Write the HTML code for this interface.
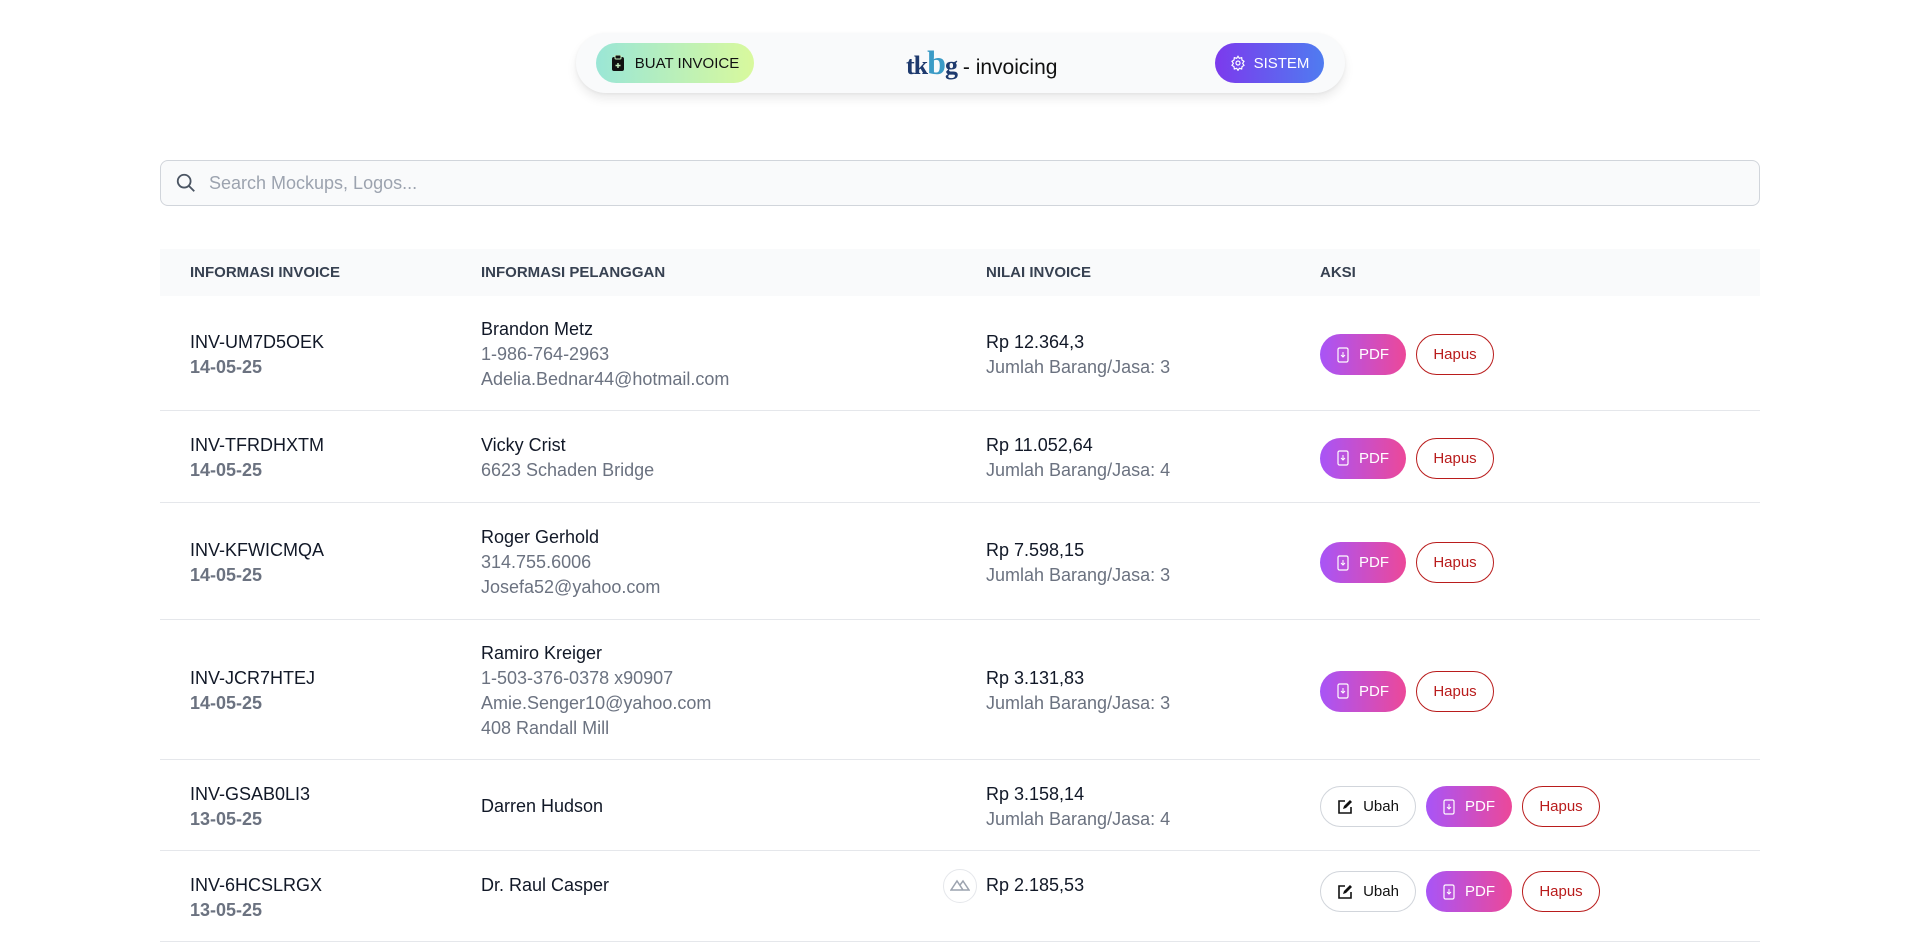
<!DOCTYPE html>
<html><head><meta charset="utf-8"><style>
*{box-sizing:border-box;margin:0;padding:0}
body{width:1920px;height:894px;overflow:hidden;background:#fff;font-family:"Liberation Sans",sans-serif;color:#111827;position:relative}
.nav{position:absolute;left:576px;top:33px;width:769px;height:60px;border-radius:30px;background:#f9fafb;box-shadow:0 6px 10px rgba(0,0,0,.08),0 1px 3px rgba(0,0,0,.05)}
.btn1{position:absolute;left:20px;top:10px;width:158px;height:40px;border-radius:20px;background:linear-gradient(90deg,#9ae6d6,#d9f99d);display:flex;align-items:center;justify-content:center;gap:10px;font-size:15px;color:#111}
.btn2{position:absolute;left:639px;top:10px;width:109px;height:40px;border-radius:20px;background:linear-gradient(90deg,#7c3aed,#4f7cf0);display:flex;align-items:center;justify-content:center;gap:8px;font-size:15px;color:#fff}
.logo{position:absolute;left:330px;top:12px;font-size:21px;color:#111;display:flex;align-items:baseline}
.logo b{font-family:"Liberation Serif",serif;color:#1e3a6e;font-size:26px;letter-spacing:-1px}
.logo b i{font-style:normal;color:#3b9bc6;font-size:34px}
.search{position:absolute;left:160px;top:160px;width:1600px;height:46px;border:1px solid #d1d5db;border-radius:8px;background:#f9fafb;display:flex;align-items:center;padding-left:14px;gap:12px;font-size:18px;color:#9ca3af}
.table{position:absolute;left:160px;top:249px;width:1600px}
.hd{height:47px;background:#f9fafb;display:flex;align-items:center;font-size:15px;font-weight:bold;color:#374151}
.row{display:flex;align-items:center;border-bottom:1px solid #e5e7eb;font-size:18px;line-height:25px;padding-top:3px}
.c1{position:relative;left:30px;width:291px}
.c2{width:505px;left:30px;position:relative}
.c3{width:334px;left:30px;position:relative}
.c4{left:30px;position:relative;display:flex;gap:10px}
.g{color:#6b7280}
.d{color:#6b7280;font-weight:bold}
.pdf{width:86px;height:41px;border-radius:21px;background:linear-gradient(90deg,#a855f7,#ec4899);color:#fff;display:flex;align-items:center;justify-content:center;gap:10px;font-size:15px}
.hap{width:78px;height:41px;border-radius:21px;border:1px solid #b91c1c;color:#b91c1c;display:flex;align-items:center;justify-content:center;font-size:15px}
.ub{width:96px;height:41px;border-radius:21px;border:1px solid #d1d5db;color:#111;display:flex;align-items:center;justify-content:center;gap:10px;font-size:15px}
</style></head><body>
<svg width="0" height="0" style="position:absolute"><defs>
<symbol id="pi" viewBox="0 0 12 16"><rect x="1" y="1" width="10" height="14" rx="1.5" fill="none" stroke="#fff" stroke-width="1.2"/><path d="M6 5v5M4 8l2 2 2-2" fill="none" stroke="#fff" stroke-width="1"/></symbol>
<symbol id="ei" viewBox="0 0 16 16"><path d="M8 2H2v12h12V8" fill="none" stroke="#111" stroke-width="1.6"/><path d="M6 10l1-3 6-6 2 2-6 6z" fill="#111"/></symbol>
</defs></svg>
<div class="nav">
<div class="btn1"><svg width="14" height="16" viewBox="0 0 14 16"><rect x="1" y="2" width="12" height="14" rx="2" fill="#111"/><rect x="4" y="0" width="6" height="4" rx="1" fill="#111" stroke="#c7f1c0"/><path d="M7 8v5M4.5 10.5h5" stroke="#c7f1c0" stroke-width="1.4"/></svg>BUAT INVOICE</div>
<div class="logo"><b>tk<i>b</i>g</b>&nbsp;- invoicing</div>
<div class="btn2"><svg width="16" height="16" viewBox="0 0 24 24" fill="none" stroke="#fff" stroke-width="1.8"><circle cx="12" cy="12" r="3"/><path d="M12 2l2 3 3.5-1 .5 3.5 3 2-2 3 2 3-3 2-.5 3.5-3.5-1-2 3-2-3-3.5 1-.5-3.5-3-2 2-3-2-3 3-2 .5-3.5 3.5 1z"/></svg>SISTEM</div>
</div>
<div class="search"><svg width="22" height="22" viewBox="0 0 24 24" fill="none" stroke="#4b5563" stroke-width="2"><circle cx="10" cy="10" r="7"/><path d="M15 15l6 6"/></svg>Search Mockups, Logos...</div>
<div class="table">
<div class="hd"><div class="c1">INFORMASI INVOICE</div><div class="c2">INFORMASI PELANGGAN</div><div class="c3">NILAI INVOICE</div><div class="c4">AKSI</div></div>
<div class="row" style="height:115px"><div class="c1">INV-UM7D5OEK<br><span class="d">14-05-25</span></div><div class="c2">Brandon Metz<br><span class="g">1-986-764-2963<br>Adelia.Bednar44@hotmail.com</span></div><div class="c3">Rp 12.364,3<br><span class="g">Jumlah Barang/Jasa: 3</span></div><div class="c4"><div class="pdf"><svg width="12" height="16"><use href="#pi"/></svg>PDF</div><div class="hap">Hapus</div></div></div>
<div class="row" style="height:92px"><div class="c1">INV-TFRDHXTM<br><span class="d">14-05-25</span></div><div class="c2">Vicky Crist<br><span class="g">6623 Schaden Bridge</span></div><div class="c3">Rp 11.052,64<br><span class="g">Jumlah Barang/Jasa: 4</span></div><div class="c4"><div class="pdf"><svg width="12" height="16"><use href="#pi"/></svg>PDF</div><div class="hap">Hapus</div></div></div>
<div class="row" style="height:117px"><div class="c1">INV-KFWICMQA<br><span class="d">14-05-25</span></div><div class="c2">Roger Gerhold<br><span class="g">314.755.6006<br>Josefa52@yahoo.com</span></div><div class="c3">Rp 7.598,15<br><span class="g">Jumlah Barang/Jasa: 3</span></div><div class="c4"><div class="pdf"><svg width="12" height="16"><use href="#pi"/></svg>PDF</div><div class="hap">Hapus</div></div></div>
<div class="row" style="height:140px"><div class="c1">INV-JCR7HTEJ<br><span class="d">14-05-25</span></div><div class="c2">Ramiro Kreiger<br><span class="g">1-503-376-0378 x90907<br>Amie.Senger10@yahoo.com<br>408 Randall Mill</span></div><div class="c3">Rp 3.131,83<br><span class="g">Jumlah Barang/Jasa: 3</span></div><div class="c4"><div class="pdf"><svg width="12" height="16"><use href="#pi"/></svg>PDF</div><div class="hap">Hapus</div></div></div>
<div class="row" style="height:91px"><div class="c1">INV-GSAB0LI3<br><span class="d">13-05-25</span></div><div class="c2">Darren Hudson</div><div class="c3">Rp 3.158,14<br><span class="g">Jumlah Barang/Jasa: 4</span></div><div class="c4"><div class="ub"><svg width="16" height="16"><use href="#ei"/></svg>Ubah</div><div class="pdf"><svg width="12" height="16"><use href="#pi"/></svg>PDF</div><div class="hap">Hapus</div></div></div>
<div class="row" style="height:91px;align-items:flex-start;padding-top:22px"><div class="c1">INV-6HCSLRGX<br><span class="d">13-05-25</span></div><div class="c2">Dr. Raul Casper</div><div class="c3">Rp 2.185,53</div><div class="c4" style="margin-top:-2px"><div class="ub"><svg width="16" height="16"><use href="#ei"/></svg>Ubah</div><div class="pdf"><svg width="12" height="16"><use href="#pi"/></svg>PDF</div><div class="hap">Hapus</div></div></div>
</div>
<div style="position:absolute;left:943px;top:869px;width:34px;height:34px;border-radius:17px;border:1px solid #e5e7eb;background:#fff"><svg width="20" height="14" viewBox="0 0 20 14" style="position:absolute;left:6px;top:8px" fill="none" stroke="#9ca3af" stroke-width="1.5"><path d="M1 12L7 3l6 9zM10 7l3-4 6 9h-6"/></svg></div>
</body></html>
